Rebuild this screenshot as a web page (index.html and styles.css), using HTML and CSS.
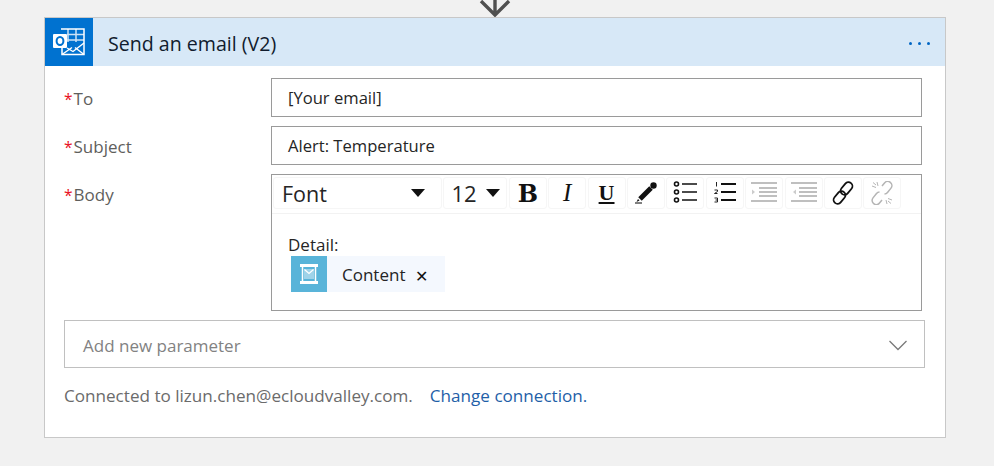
FILE: index.html
```html
<!DOCTYPE html>
<html lang="en">
<head>
  <meta charset="utf-8">
  <title>Send an email (V2)</title>
  <link rel="stylesheet" href="styles.css">
</head>
<body>
  <div class="connector">
    <svg width="32" height="17" viewBox="0 0 32 17"><path d="M16 -6V15M2 1l14 14L30 1" fill="none" stroke="#505050" stroke-width="3.400"/></svg>
  </div>
  <div class="card">
    <div class="card-head">
      <div class="app-icon">
        <svg width="32" height="28" viewBox="0 0 32 28">
          <path d="M8 1h23v25.500H9V20" fill="none" stroke="#fff" stroke-width="1.500"/>
          <path d="M15 1v13M23 1v13M14 6.500h17M14 12h17" stroke="#fff" stroke-width="1.500" opacity=".8"/>
          <path d="M14 20l6 3.500L31 15M9 26.500l10-7M31 26.500l-9-7" fill="none" stroke="#fff" stroke-width="1.400"/>
          <rect x="0" y="6" width="14" height="14" rx="1" fill="#fff"/>
          <ellipse cx="7" cy="13" rx="3.400" ry="4" fill="none" stroke="#0072d0" stroke-width="2"/>
        </svg>
      </div>
      <div class="card-title">Send an email (V2)</div>
      <div class="more"><i></i><i></i><i></i></div>
    </div>
    <div class="card-body">
      <div class="field">
        <label class="field-label"><span class="req">*</span>To</label>
        <div class="input">[Your email]</div>
      </div>
      <div class="field">
        <label class="field-label"><span class="req">*</span>Subject</label>
        <div class="input">Alert: Temperature</div>
      </div>
      <div class="field">
        <label class="field-label"><span class="req">*</span>Body</label>
        <div class="editor">
          <div class="toolbar">
            <div class="tool tool-font">Font<span class="caret"></span></div>
            <div class="tool tool-size">12<span class="caret"></span></div>
            <div class="tool tool-b">B</div>
            <div class="tool tool-i">I</div>
            <div class="tool tool-u">U</div>
            <div class="tool">
              <svg width="24" height="24" viewBox="0 0 24 24"><path d="M6 18L17 7" stroke="#111" stroke-width="5"/><circle cx="19.500" cy="4.500" r="3.200" fill="#111"/><path d="M4 18l-1.500 3 3-1.500z" fill="#111"/><path d="M1 22h7" stroke="#555" stroke-width="1.500"/></svg>
            </div>
            <div class="tool">
              <svg width="24" height="24" viewBox="0 0 24 24" fill="none" stroke="#111" stroke-width="1.600"><circle cx="3.500" cy="3" r="2"/><circle cx="3.500" cy="11" r="2"/><circle cx="3.500" cy="19" r="2"/><path d="M9 3h15M9 11h15M9 19h15"/></svg>
            </div>
            <div class="tool">
              <svg width="24" height="24" viewBox="0 0 24 24"><path d="M8 3h15M8 11h15M8 19h15" stroke="#111" stroke-width="2"/><path d="M3.500 1v4.500M1.500 9h3v1.500l-3 2h3M1.500 17h3v4h-3M2.500 19h2" fill="none" stroke="#222" stroke-width="1"/></svg>
            </div>
            <div class="tool">
              <svg width="28" height="24" viewBox="0 0 28 24" fill="none" stroke="#aaa" stroke-width="1.500"><path d="M1 2h26M9 7h18M9 11h18M9 15h18M1 20h26"/><path d="M2 8.500l3 2.500-3 2.500z" fill="#ccc" stroke="none"/></svg>
            </div>
            <div class="tool">
              <svg width="28" height="24" viewBox="0 0 28 24" fill="none" stroke="#aaa" stroke-width="1.500"><path d="M1 2h26M9 7h18M9 11h18M9 15h18M1 20h26"/><path d="M6 8.500L3 11l3 2.500z" fill="#ccc" stroke="none"/></svg>
            </div>
            <div class="tool">
              <svg width="24" height="24" viewBox="0 0 24 24" fill="none" stroke="#111" stroke-width="1.800">
                <rect x="8.500" y="3.500" width="14" height="8" rx="4" transform="rotate(-50 15.500 7.500)"/>
                <rect x="1.500" y="12.500" width="14" height="8" rx="4" transform="rotate(-50 8.500 16.500)"/>
              </svg>
            </div>
            <div class="tool">
              <svg width="24" height="24" viewBox="0 0 24 24" fill="none" stroke="#b5b5b5" stroke-width="1.500">
                <path d="M12 5l2.500-3c1.500-1.800 4-2 5.800-.6s2.100 3.900.7 5.700l-3.500 4.400c-.8 1-1.800 1.500-3 1.500"/>
                <path d="M12 19l-2.500 3c-1.500 1.800-4 2-5.800.6s-2.100-3.900-.7-5.700l3.500-4.400c.8-1 1.800-1.500 3-1.500"/>
                <path d="M7 1l1 4M2 5l4 1.500M3 1.500L6 4M17 23l-1-4M22 19l-4-1.500M21 22.500L18 20" stroke-width="1"/>
              </svg>
            </div>
          </div>
          <div class="editor-text">
            <div class="detail">Detail:</div>
            <div class="token">
              <div class="token-icon">
                <svg width="18" height="20" viewBox="0 0 18 20" fill="none">
                  <path d="M0 1.500h18M0 18.500h18" stroke="#fff" stroke-width="3"/>
                  <path d="M2.500 3v14M15.500 3v14" stroke="#fff" stroke-width="1.500"/>
                  <path d="M4 5h10v10H4z" fill="#9fd3e9"/>
                  <path d="M4.500 5.500L9 9.500l4.500-4" stroke="#fff" stroke-width="1.200"/>
                </svg>
              </div>
              <span class="token-name">Content</span>
              <span class="token-x">✕</span>
            </div>
          </div>
        </div>
      </div>
      <div class="add-param">
        <span>Add new parameter</span>
        <svg width="20" height="11" viewBox="0 0 20 11"><path d="M1.500 1l8.500 8.500L18.500 1" fill="none" stroke="#7a7a7a" stroke-width="1.300"/></svg>
      </div>
      <div class="connection">Connected to lizun.chen@ecloudvalley.com.<a class="change" href="#">Change connection.</a></div>
    </div>
  </div>
</body>
</html>
```
FILE: styles.css
```css
html, body {margin: 0; height: 100%;}
body {
  background: #f1f1f1;
  font-family: "Open Sans", "Noto Sans", sans-serif;
  font-size: 17px;
  color: #252525;
  overflow: hidden;
}

.connector {height: 17px; display: flex; justify-content: center; padding-right: 4px;}
.connector svg {display: block;}

.card {
  width: 900px;
  height: 419px;
  margin-left: 44px;
  background: #fff;
  border: 1px solid #c8c8c8;
}
.card-head {display: flex; align-items: center; height: 48px; background: #d7e8f7;}
.app-icon {
  width: 48px;
  height: 48px;
  background: #0072d0;
  display: flex;
  align-items: center;
  justify-content: center;
}
.card-title {flex: 1; margin: 2px 0 0 15px; font-size: 19.6px; color: #111c2e;}
.more {display: flex; gap: 6px; margin: 2px 15px 0 0;}
.more i {width: 3px; height: 3px; border-radius: 50%; background: #0066c4;}

.card-body {padding: 12px 23px 0 19px;}
.field {display: flex; margin-bottom: 9px;}
.field-label {width: 207px; padding-top: 9px; font-size: 17px; color: #605e5c;}
.req {color: #e81123; margin-right: 1px; font-size: 15.500px;}

.input {
  flex: 1;
  height: 37px;
  line-height: 37px;
  padding-left: 16px;
  border: 1px solid #9a9a9a;
  font-size: 16.6px;
}

.editor {flex: 1; height: 135px; border: 1px solid #9a9a9a;}
.toolbar {display: flex; height: 36px; padding: 2px 0 0 1px; gap: 1.400px; border-bottom: 1px solid #f2f2f2;}
.tool {
  display: flex;
  align-items: center;
  justify-content: center;
  box-sizing: border-box;
  width: 38px;
  height: 32px;
  border: 1px solid #f6f6f6;
  border-radius: 3px;
}
.tool svg {display: block;}
.tool-font {width: 169px; justify-content: space-between; padding: 0 16px 0 8px; font-size: 21.500px;}
.tool-size {width: 64px; justify-content: space-between; padding: 0 6px 0 7px; font-size: 22px;}
.caret {
  width: 0;
  height: 0;
  border-left: 7px solid transparent;
  border-right: 7px solid transparent;
  border-top: 8px solid #111;
}
.tool-b {font-family: "DejaVu Serif", serif; font-weight: bold; font-size: 24px; color: #111;}
.tool-i {font-family: "Liberation Serif", serif; font-style: italic; font-size: 25px; color: #111;}
.tool-u {font-family: "Liberation Serif", serif; font-weight: bold; font-size: 22px; text-decoration: underline; color: #111;}

.editor-text {padding: 20px 0 0 16px;}
.detail {font-size: 17px; line-height: 22px;}
.token {display: inline-flex; align-items: center; height: 36px; margin-left: 3px; background: #f4f8fe;}
.token-icon {
  width: 36px;
  height: 36px;
  background: #59b4d9;
  display: flex;
  align-items: center;
  justify-content: center;
}
.token-name {margin: 0 0 0 15px; font-size: 17px;}
.token-x {margin: 5px 17px 0 10px; font-size: 15.500px; line-height: 1; color: #111;}

.add-param {
  display: flex;
  align-items: center;
  justify-content: space-between;
  height: 44px;
  margin-right: -3px;
  padding: 2px 16px 0 18px;
  border: 1px solid #c0c0c0;
  color: #828282;
}
.connection {margin-top: 15px; font-size: 17.100px; line-height: 25px; color: #6b6b6b;}
.change {margin-left: 17px; color: #1f5fa8; text-decoration: none;}
```
